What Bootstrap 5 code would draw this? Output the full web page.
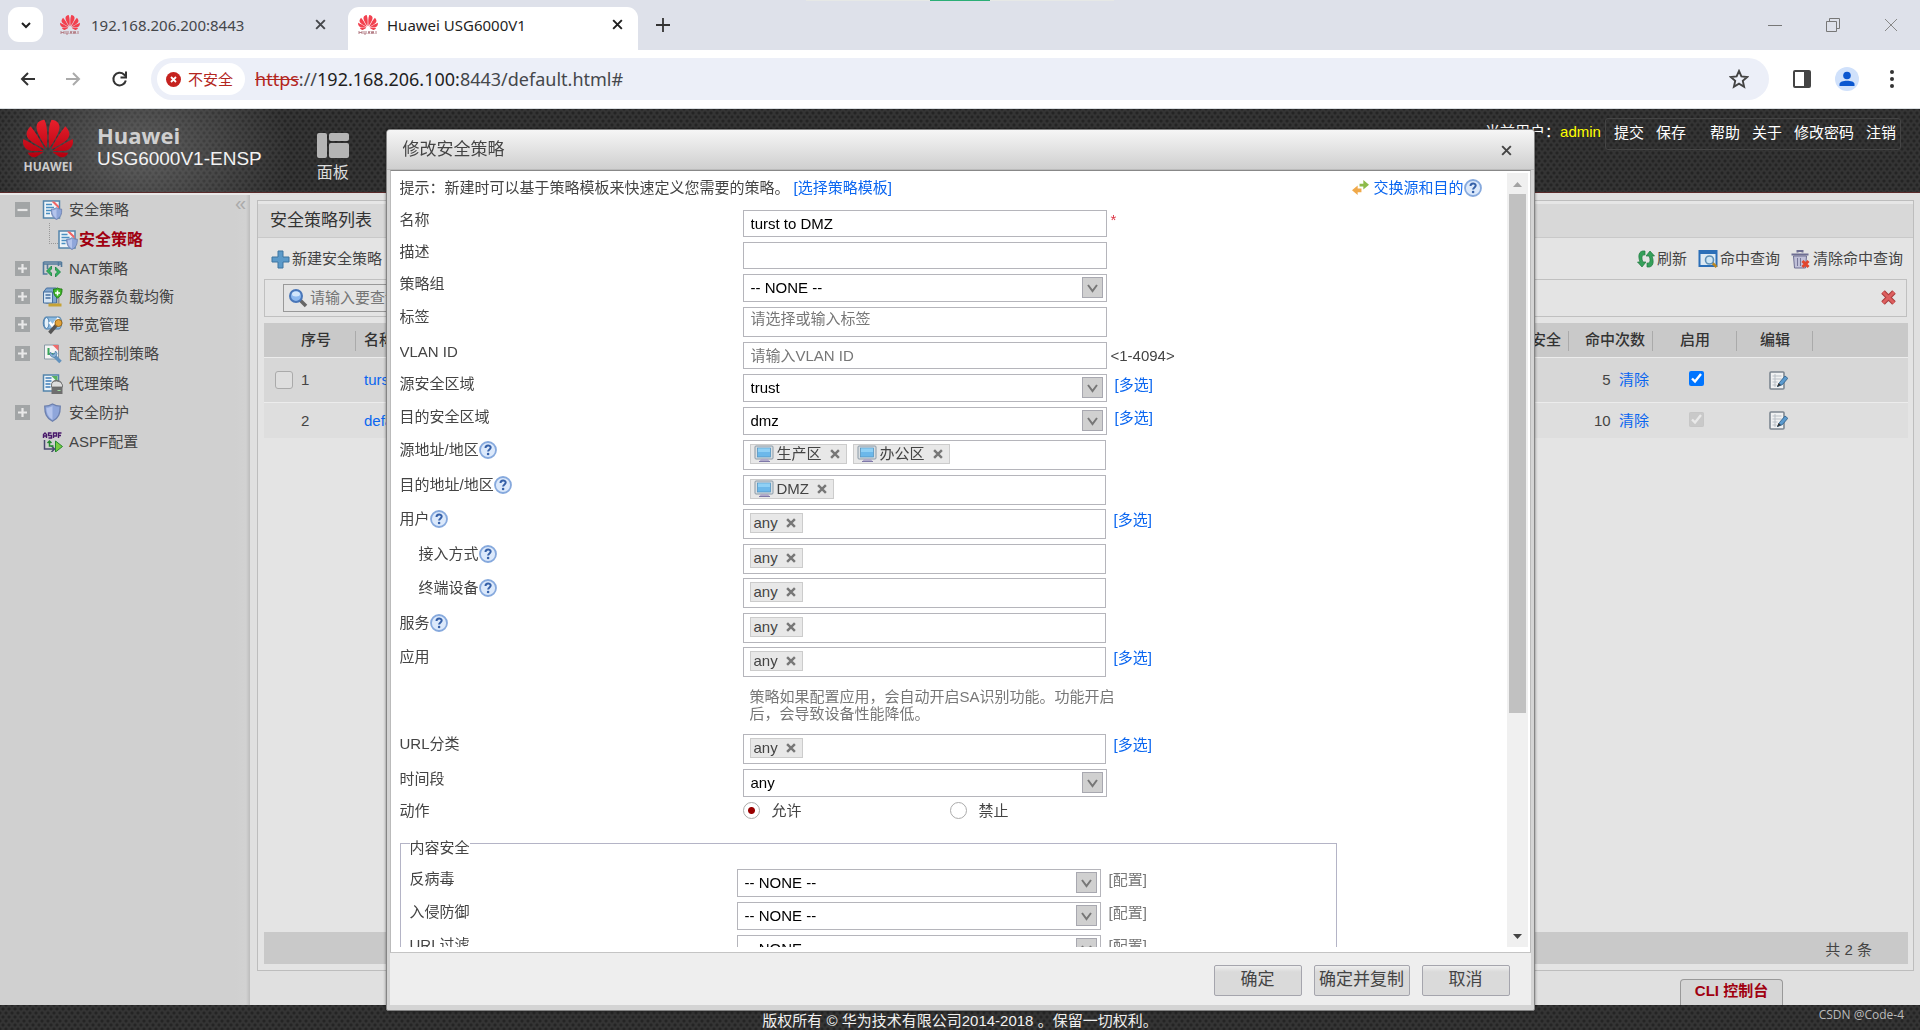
<!DOCTYPE html>
<html lang="zh-CN">
<head>
<meta charset="utf-8">
<meta name="viewport" content="width=device-width, initial-scale=1">
<title>Huawei USG6000V1</title>
<link rel="stylesheet" href="https://cdn.jsdelivr.net/npm/bootstrap@5.3.0/dist/css/bootstrap.min.css">
<style>
:root{--ui:"Liberation Sans","Noto Sans CJK SC",sans-serif;--chrome:"Noto Sans","Noto Sans CJK SC",sans-serif}
body{font:15px/20px var(--ui);color:#444;background:#dfdfdf;overflow:hidden}
a{color:#0a66f0;text-decoration:none}
button{font-family:inherit;color:inherit;border:0;background:none;padding:0}
svg{flex:none;display:block}
/* browser frame */
.strip{height:50px;background:#dee1ea;font-family:var(--chrome);padding:7px 0 0 8px;position:relative}
.share{position:absolute;top:0;left:42%;right:42%;height:1px;background:#e6e8e6}
.share i{display:block;width:60px;height:1px;margin:0 auto;background:#2bae76}
.tabmenu{width:35px;height:35px;border-radius:11px;background:#fff}
.tabx{height:43px;color:#45474b}
.tab-idle{width:305px;padding:0 21px 8px 16px}
.tab-idle span{padding-left:2px}
.tab-on{width:290px;padding:0 14px 8px 9px;background:#fff;border-radius:11px 11px 0 0;color:#1f1f1f}
.strip-row{height:43px}
.winctl{gap:44px;padding:0 22px 8px 0}
.tools{height:59px;background:#fff;border-bottom:1px solid #d9dde0;font-family:var(--chrome);padding:8px 19px;gap:24px}
.omni{height:42px;border-radius:21px;background:#eceff8;padding:0 20px 0 6px;margin-left:-2px}
.chip{height:32px;border-radius:16px;background:#fff;color:#b3261e;padding:0 12px 0 9px;gap:7px;font-size:15px}
.url{font-size:18px;color:#45474b;margin-left:10px}
.url b{font-weight:400;color:#1f1f1f}.url s{color:#b3261e}
/* banner */
.dots{background-color:#343434;background-image:radial-gradient(circle,#242424 1px,transparent 2px),radial-gradient(circle,#242424 1px,transparent 2px);background-size:6px 8px;background-position:0 0,3px 4px}
.banner{height:84px;border-bottom:1px solid #5a2b2b;padding-left:20px;position:relative}
.glow{background:radial-gradient(ellipse 150px 110px at 140px 42px,rgba(170,170,170,.36),transparent);position:absolute;inset:0}
.brand{width:56px;text-align:center;color:#ccc;font:bold 12px/12px "Open Sans",sans-serif}
.brand span{margin-top:1px}
.prod{color:#f2f2f2;font-size:19px;line-height:24px;margin-left:21px;padding-top:14px}
.prod strong{font:bold 22px/24px "Open Sans",sans-serif;color:#d0d0d0}
.panelbtn{color:#ddd;font-size:16px;line-height:20px;gap:5px;margin-left:55px}
.usernav{color:#fff;padding:9px 19px 0 0}
.usernav a{color:#fff}
.usergrp{border:1px solid #444;border-radius:3px;height:32px;padding:4px 4px 0 8px;gap:12px}
.usergrp .brk{margin-right:12px}
.admin{color:#ff0}
/* sidebar */
.side{width:250px;background:linear-gradient(90deg,#d0d0d0 235px,#d2d2d2 246px,#bcbcbc);border-top:2px solid #e9e9e9;position:relative}
.side li{height:28px;padding-left:15px}
.side li>a{color:#444;margin-left:6px}
.side li>.fold{margin-right:12px}
.side .big{height:30px}
.side .subitem{padding-left:58px}
.side .subitem>a{font-weight:700;color:#a00010;font-size:16px;margin-left:1px}
.fold{width:15px;height:15px}
.collapse-btn{position:absolute;right:4px;top:1px;color:#aaa;font-size:20px;line-height:14px}
.twig{position:absolute;left:49px;top:28px;width:9px;height:21px;border:1px dotted #999;border-width:0 0 1px 1px}
/* list panel */
.main{padding:7px 6px 0 7px;background:#e0e0e0}
.sheet{border:1px solid #bdbdbd;background:#e4e4e4;height:771px}
.sheet-h{height:37px;background:#d8d8d8;border-top:3px solid #e6e6e6;border-bottom:1px solid #c9c9c9;padding:2px 12px 0;font-size:17px;color:#333}
.bar{height:41px;padding:2px 10px 0 13px;gap:2px}
.bar .act{margin-right:9px}
.filter{margin:0 6px;height:38px;border:1px solid #c0c0c0;padding:0 9px 0 18px}
.search{border:1px solid #999;height:28px;width:220px;padding:0 4px;gap:2px}
.search input{border:0;background:none;padding:0;width:180px;color:#777}
.gridt{margin:6px 5px 0 6px;table-layout:fixed;width:calc(100% - 11px)}
.gridt th{height:35px;background:#c9c9c9;font-weight:500;color:#333;text-align:center;padding:0;position:relative}
.gridt th.sep::after{content:"";position:absolute;right:0;top:8px;height:20px;border-right:1px solid #aaa}
.gridt td{padding:0;border-top:1px solid #ececec;background:#d7d7d7}
.gridt tr.r1 td{height:45px}.gridt tr.r2 td{height:35px;background:#dedede}
.gridt input{width:15px;height:15px;margin:0;display:block}
.gridt input.pick{width:18px;height:18px;appearance:none;border:1px solid #aaa;border-radius:3px;background:#dedede}
.gridt .tick{padding:0 0 3px 3px}
.gridt .pen{padding-left:6px}
.count{margin:0 5px 6px 6px;height:32px;background:#c9c9c9;padding-right:36px;padding-top:4px}
.cli{height:27px;width:103px;margin-right:131px;margin-top:8px;border:1px solid #999;border-bottom:0;border-radius:4px 4px 0 0;background:#d6d6d6;color:#a00010;font-weight:700;padding-bottom:3px}
.foot{height:25px;color:#f0f0f0;position:relative;padding-top:6px}
.mark-by{position:absolute;right:16px;top:0;color:#bbb;font:12px/20px "Open Sans",sans-serif}
/* dialog */
.dlg{position:fixed;inset:129px 0 19px;margin:0 auto;max-width:1149px;border:1px solid #858585;border-radius:4px 4px 2px 2px;background:#d4d4d4;padding:0 3px 5px;box-shadow:0 0 3px rgba(0,0,0,.5)}
.dlg-h{height:41px;margin:0 -3px;background:linear-gradient(#f6f6f6,#cfcfcf);border-bottom:1px solid #bbb;border-radius:3px 3px 0 0;padding:2px 21px 0 16px;font-size:17px;color:#444}
.dlg-b{background:#fff;border:1px solid #999;border-color:#888 #bbb #c4c4c4;min-height:0;padding:2px 2px 5px 9px}
.formarea{min-height:0;overflow:hidden;padding-top:5px}
.dlg-f{height:52px;background:#eee;padding:2px 21px 0;gap:12px}
.dlg-f button{height:31px;width:88px;font-size:17px;border:1px solid #a5a5ad;border-radius:2px;background:linear-gradient(#eee,#dadada 6px);color:#444}
.dlg-f .wide{width:96px}
.tip{height:32px;padding-right:25px}
.tip .pick-tpl{margin-left:4px}
.fr{height:32px}
.fr.s{height:33px}.fr.t{height:35px}.fr.v{height:34px}.fr.u{height:35px}
.fr>.cap{width:343px;flex:none}
.fr>.cap.in{padding-left:19px}
fieldset .fr>.cap{width:327px}
.box{width:364px;height:27px;border:1px solid #b5b5bb;border-radius:0;background:#fff;padding:0 7px;color:#000;font:15px/20px var(--ui);outline:0}
.box::placeholder{color:#777}
.tall{height:30px;padding:0 7px 6px}
select.box{height:28px;appearance:none;background:url("data:image/svg+xml,%3Csvg xmlns='http://www.w3.org/2000/svg' width='21' height='21'%3E%3Crect x='.5' y='.5' width='20' height='20' fill='%23d0d0d0' stroke='%23a8a8b0'/%3E%3Cpath d='M6 8l4.500 6L15 8' fill='none' stroke='%23777' stroke-width='2'/%3E%3C/svg%3E") no-repeat right 3px center}
.after{margin:1px 0 0 8px}
.cfg{margin:1px 0 0 8px;color:#777}
.toks{width:363px;height:30px;border:1px solid #b5b5bb;padding:3px 6px;gap:6px}
.tok{height:20px;border:1px solid #ccc;background:#e8e8e8;padding:0 6px 0 3px;gap:8px;line-height:18px}
.tok .nm{gap:3px}
.note{margin:6px 0 0 350px;width:370px;height:46px;line-height:17px;color:#777}
.rad{appearance:none;width:17px;height:17px;margin:0;border:1px solid #aaa;border-radius:50%;background:#fff}
.rad:checked{background:radial-gradient(circle,#900 3px,#fff 4px)}
.fr.radios{height:20px}
.opt{gap:12px;width:207px}
fieldset.cs{border:1px solid #b4b4c6;width:937px;padding:0 9px;margin-top:9px}
fieldset.cs legend{float:none;width:auto;font-size:15px;line-height:20px;padding:8px 0 0;margin:0}
.csrows{padding-top:11px}
.sb{width:21px;background:#f0f0f0}
.sb b{display:block;width:17px;height:519px;background:#c1c1c1}
</style>
<script src="https://cdn.jsdelivr.net/npm/bootstrap@5.3.0/dist/js/bootstrap.bundle.min.js"></script>
</head>
<body class="vh-100 d-flex flex-column">
<svg width="0" height="0" class="position-absolute" aria-hidden="true">
<linearGradient id="gr" x1="0" y1="0" x2="0" y2="1"><stop offset="0" stop-color="#e8202c"/><stop offset="1" stop-color="#b5000f"/></linearGradient>
<symbol id="hw" viewBox="0 2.900 24 18.200"><path d="M3.67 6.14S1.82 7.91 1.72 9.78v.35c.08 1.51 1.22 2.4 1.22 2.4 1.83 1.79 6.26 4.04 7.3 4.55 0 0 .06.03.1-.01l.02-.04v-.04C7.52 10.8 3.67 6.14 3.67 6.14zM9.65 18.6c-.02-.08-.1-.08-.1-.08l-7.38.26c.8 1.43 2.15 2.53 3.56 2.2.96-.25 3.16-1.78 3.88-2.3.06-.05.04-.09.04-.09zm.08-.78C6.49 15.63.21 12.28.21 12.28c-.15.46-.2.9-.21 1.3v.07c0 1.07.4 1.82.4 1.82.8 1.69 2.34 2.2 2.34 2.2.7.3 1.4.31 1.4.31.12.02 4.4 0 5.54 0 .05 0 .08-.05.08-.05v-.06c0-.03-.03-.05-.03-.05zM9.06 3.19a3.42 3.42 0 00-2.57 3.15v.41c.03.6.16 1.05.16 1.05.66 2.9 3.86 7.65 4.55 8.65.05.05.1.03.1.03a.1.1 0 00.06-.1c1.06-10.6-1.11-13.42-1.11-13.42-.32.02-1.19.23-1.19.23zm8.299 2.27s-.49-1.8-2.44-2.28c0 0-.57-.14-1.17-.22 0 0-2.18 2.81-1.12 13.43.01.07.06.08.06.08.07.03.1-.03.1-.03.72-1.03 3.9-5.76 4.55-8.64 0 0 .36-1.4.02-2.34zm-2.92 13.07s-.07 0-.09.05c0 0-.01.07.03.1.7.51 2.85 2 3.88 2.3 0 0 .16.05.43.06h.14c.69-.02 1.9-.37 3-2.26l-7.4-.25zm7.83-8.41c.14-2.06-1.94-3.97-1.94-3.98 0 0-3.85 4.66-6.67 10.8 0 0-.03.08.02.13l.04.01h.06c1.06-.53 5.46-2.77 7.28-4.54 0 0 1.15-.93 1.21-2.42zm1.52 2.14s-6.28 3.37-9.52 5.55c0 0-.05.04-.03.11 0 0 .03.06.07.06 1.16 0 5.56 0 5.67-.02 0 0 .57-.02 1.27-.29 0 0 1.56-.5 2.37-2.27 0 0 .73-1.45.17-3.14z"/></symbol>
<symbol id="fav" viewBox="0 0 20 20"><use href="#hw" width="20" height="15" fill="#f2414f"/><path d="M1 16v3M4 16v3M1 17.500h3M6 16v3h2v-3M10 19l1-3 1 3M13 16l1 3 1-3 1 3M18 16v3" stroke="#b58088" fill="none"/></symbol>
<symbol id="x" viewBox="0 0 12 12"><path d="M2 2l8 8M10 2l-8 8" stroke="currentColor" stroke-width="1.800" fill="none"/></symbol>
<symbol id="plus" viewBox="0 0 15 15"><rect width="15" height="15" fill="#a2a5a6"/><path d="M7.500 3v9M3 7.500h9" stroke="#e8e8e8" stroke-width="2.200"/></symbol>
<symbol id="minus" viewBox="0 0 15 15"><rect width="15" height="15" fill="#a2a5a6"/><path d="M2.500 8h10" stroke="#e8e8e8" stroke-width="2.200"/></symbol>
<symbol id="shield" viewBox="0 0 12 13"><path d="M6 .7c2 1.300 3.500 1.500 5.300 1.500 0 5-1 8-5.300 10.300C1.700 10.200.7 7.200.7 2.200 2.500 2.200 4 2 6 .7z" fill="#8fa6da" stroke="#6d80ae" stroke-width=".9"/><path d="M6 2v9.500C3 9.500 2 7 1.800 3.300 3.500 3.200 4.800 2.800 6 2z" fill="#b4c4ec"/></symbol>
<symbol id="pol" viewBox="0 0 20 20"><rect x="1" y="1" width="16" height="17" fill="#eef4f8" stroke="#5384ab" stroke-width="1.500"/><path d="M3.500 4.500h6M3.500 7.500h8M3.500 10.500h6M3.500 13.500h4" stroke="#4a8fc2" stroke-width="1.500"/><path d="M9 1.500h3l4.500 4.500v3z" fill="#f06464"/><use href="#shield" x="8" y="7" width="12" height="13"/></symbol>
<symbol id="nat" viewBox="0 0 20 20"><path d="M1 3h18M1 3v12h4M19 3v5M16 3v4M1 5h18M5 5v5" stroke="#52799c" stroke-width="1.600" fill="none"/><path d="M9 7l-5 5 5 5v-3l-2-2 2-2zM13 8l5 5-5 5v-3l2-2-2-2z" fill="#32b45c" stroke="#178040" stroke-width=".8"/></symbol>
<symbol id="srv" viewBox="0 0 20 20"><path d="M1 5l3-4h10v15H4l-3-1z" fill="#7fa5ce" stroke="#466f9e"/><path d="M1 5h9v11H1z" fill="#d5e5f4" stroke="#466f9e"/><path d="M3 8h5M3 11h5" stroke="#466f9e" stroke-width="1.500"/><path d="M16 10v7" stroke="#999" stroke-width="2"/><path d="M6 18h13" stroke="#c6a336" stroke-width="3"/><path d="M15 1c2 1 3 1 4.500 1 0 5-1 7-4.500 9-3-2-4-4-4-9 2 0 3 0 4-1z" fill="#3fb827" stroke="#217b15"/><path d="M15 3.500v5M12.500 6h5" stroke="#fff" stroke-width="1.500"/></symbol>
<symbol id="bw" viewBox="0 0 20 20"><path d="M3 2h14c3 3 3 9 0 12H3C0 11 0 5 3 2z" fill="#8fbce2" stroke="#4b7eac"/><ellipse cx="4" cy="8" rx="2.500" ry="5.500" fill="#e5f1fa" stroke="#4b7eac"/><path d="M7 7l3 4 6-8" stroke="#fff" stroke-width="2.500" fill="none"/><path d="M7 18l7-8" stroke="#555" stroke-width="3.500"/><circle cx="16" cy="8" r="3.500" fill="#e2a33a" stroke="#9a6a1d"/></symbol>
<symbol id="quota" viewBox="0 0 20 20"><path d="M2 1h14v14H2z" fill="#f3f3f3" stroke="#8899a6"/><path d="M6 4v6h7" stroke="#38a557" stroke-width="2" fill="none"/><path d="M10 1h6v6z" fill="#ef6b6b"/><path d="M10 10l8 8" stroke="#6292bd" stroke-width="3.500"/><path d="M8 8a3.500 3.500 0 1 0 5-1l-1 3-2 1z" fill="#8cb4d8" stroke="#4d7ca6" stroke-width=".7"/></symbol>
<symbol id="proxy" viewBox="0 0 20 20"><path d="M1 1h15v16H1z" fill="#eef4f8" stroke="#5384ab" stroke-width="1.500"/><path d="M3 4h6M3 7h6M3 10h5M3 13h5" stroke="#3f7eb8" stroke-width="1.700"/><path d="M9 2h6v6z" fill="#58b05f"/><path d="M9 11q0-5 5-5t6 5v9H9z" fill="#6e6e6e"/><path d="M9 11q0-4 5-4t6 4v2H9z" fill="#ddd" stroke="#666" stroke-width=".8"/><path d="M15 16.500h3" stroke="#a0e0a0"/></symbol>
<symbol id="aspf" viewBox="0 0 20 20"><path d="M1 6V2.500L2.500 1 4 2.500V6M1 4h3M9 1H6v2.500h3V6H6M11 6V1h3v3h-3M19 1h-3v5M16 3.500h2.500" stroke="#4a1a6b" stroke-width="1.400" fill="none"/><path d="M2 8v9h9M9 14l3 3-3 3" stroke="#4a4a70" stroke-width="1.500" fill="none"/><path d="M5 11l2-2 2 2M7 9v5h4" stroke="#238a30" stroke-width="1.500" fill="none"/><path d="M13 9l7 5.500-7 5.500z" fill="#7ac943" stroke="#238a30"/></symbol>
<symbol id="help" viewBox="0 0 18 18"><circle cx="9" cy="9" r="8" fill="#dce9fb" stroke="#86a9dd" stroke-width="1.800"/><path d="M6.500 7c0-3.500 5.200-3.300 5.200-.4 0 1.800-2.600 1.900-2.600 4" stroke="#3560a8" stroke-width="2" fill="none"/><circle cx="9.100" cy="13" r="1.300" fill="#3560a8"/></symbol>
<symbol id="pc" viewBox="0 0 20 18"><rect x="1" y="1" width="18" height="13" rx="1" fill="#d9dfe3" stroke="#8b9aa6"/><rect x="3.500" y="3" width="13" height="9" fill="#6cb8ea" stroke="#4d8fbd" stroke-width=".7"/><path d="M4 3.400h12v3.600H4z" fill="#8fd0f5"/><path d="M7 14h7l2 3H5z" fill="#b0aaca"/><path d="M5 16.500h11" stroke="#7f78a8"/></symbol>
<symbol id="tx" viewBox="0 0 9 9"><path d="M1 1l7 7M8 1L1 8" stroke="#777" stroke-width="2.200"/></symbol>
<symbol id="edit" viewBox="0 0 19 19"><rect x="1" y="1" width="14" height="17" rx="1" fill="#f0f1f2" stroke="#7d8791" stroke-width="1.600"/><path d="M3.500 5h9M3.500 8h9M3.500 11h5M3.500 14h4M6 3v13" stroke="#b9bfc6"/><path d="M8.500 15.500l2-4 5.500-6.500 2.800 2.300-5.500 6.400z" fill="#5c9bcf" stroke="#3b6c96"/><path d="M8 16l1.500-4 2.500 2z" fill="#333"/></symbol>
</svg>

<header class="strip">
  <div class="share"><i></i></div>
  <div class="d-flex strip-row">
    <button class="tabmenu d-flex align-items-center justify-content-center" aria-label="搜索标签页"><svg width="12" height="12" viewBox="0 0 12 12"><path d="M2 4l4 4 4-4" stroke="#1f1f1f" stroke-width="2" fill="none"/></svg></button>
    <div class="tabx tab-idle d-flex align-items-center"><svg width="22" height="20"><use href="#fav"/></svg><span class="ms-2 flex-grow-1">192.168.206.200:8443</span><button aria-label="关闭"><svg width="13" height="13"><use href="#x"/></svg></button></div>
    <div class="tabx tab-on d-flex align-items-center"><svg width="22" height="20"><use href="#fav"/></svg><span class="ms-2 flex-grow-1">Huawei USG6000V1</span><button aria-label="关闭"><svg width="13" height="13"><use href="#x"/></svg></button></div>
    <button class="ms-3 pb-2" aria-label="新标签页"><svg width="18" height="18" viewBox="0 0 18 18"><path d="M9 2v14M2 9h14" stroke="#333" stroke-width="1.800"/></svg></button>
    <div class="winctl ms-auto d-flex align-items-center">
      <svg width="14" height="14" viewBox="0 0 14 14"><path d="M0 7.500h14" stroke="#777"/></svg>
      <svg width="14" height="14" viewBox="0 0 14 14"><path d="M.5 3.500h10v10H.5zM3.500 3V.5h10v10H11" stroke="#777" fill="none"/></svg>
      <svg width="14" height="14" viewBox="0 0 14 14"><path d="M1 1l12 12M13 1L1 13" stroke="#888"/></svg>
    </div>
  </div>
</header>
<div class="tools d-flex align-items-center">
  <button aria-label="后退"><svg width="18" height="18" viewBox="0 0 18 18"><path d="M16 9H3M9 3L3 9l6 6" stroke="#333" stroke-width="2" fill="none"/></svg></button>
  <button class="ms-1" aria-label="前进"><svg width="18" height="18" viewBox="0 0 18 18"><path d="M1 9h13M8 3l6 6-6 6" stroke="#aaa" stroke-width="2" fill="none"/></svg></button>
  <button class="ms-1" aria-label="刷新"><svg width="18" height="18" viewBox="0 0 18 18"><path d="M14.800 10.500A6.300 6.300 0 1 1 13 4.500l2 2" stroke="#333" stroke-width="2" fill="none"/><path d="M15 1.500v6H9.500" stroke="#333" stroke-width="2" fill="none"/></svg></button>
  <div class="omni flex-grow-1 d-flex align-items-center">
    <span class="chip d-flex align-items-center"><svg width="15" height="15" viewBox="0 0 15 15"><circle cx="7.500" cy="7.500" r="7.500" fill="#c5221f"/><path d="M5 5l5 5M10 5l-5 5" stroke="#fff" stroke-width="1.800"/></svg>不安全</span>
    <span class="url"><s>https</s>://<b>192.168.206.100:</b>8443/default.html#</span>
    <button class="ms-auto" aria-label="收藏"><svg width="20" height="20" viewBox="0 0 20 20"><path d="M10 2l2.400 5.400 5.800.6-4.400 3.900 1.300 5.800-5.100-3-5.100 3 1.300-5.800L1.800 8l5.800-.6z" stroke="#444" stroke-width="1.900" fill="none"/></svg></button>
  </div>
  <button aria-label="侧边栏"><svg width="18" height="18" viewBox="0 0 18 18"><rect x="1" y="1" width="16" height="16" rx="1" stroke="#444" stroke-width="2" fill="none"/><path d="M11 1h6v16h-6z" fill="#444"/></svg></button>
  <button aria-label="用户"><svg width="24" height="24" viewBox="0 0 24 24"><circle cx="12" cy="12" r="12" fill="#d0e1fb"/><circle cx="12" cy="8.500" r="3.800" fill="#0b57d0"/><path d="M4.500 19v-2c0-4.500 15-4.500 15 0v2z" fill="#0b57d0"/></svg></button>
  <button class="px-1" aria-label="菜单"><svg width="10" height="18" viewBox="0 0 10 18"><g fill="#333"><circle cx="5" cy="2" r="2"/><circle cx="5" cy="9" r="2"/><circle cx="5" cy="16" r="2"/></g></svg></button>
</div>

<div class="banner dots">
  <div class="glow"></div>
  <div class="d-flex position-relative">
    <div class="brand pt-2 d-flex flex-column align-items-center"><svg width="50" height="43"><use href="#hw" fill="url(#gr)"/></svg><span>HUAWEI</span></div>
    <div class="prod d-flex flex-column"><strong>Huawei</strong><span>USG6000V1-ENSP</span></div>
    <a class="panelbtn pt-4 d-flex flex-column align-items-center" href="#"><svg width="32" height="25" viewBox="0 0 32 25"><g fill="#b5b5b5"><rect width="10" height="25" rx="2"/><rect x="12" width="20" height="8" rx="2"/><rect x="12" y="10" width="20" height="15" rx="2"/></g></svg><span>面板</span></a>
    <div class="usernav ms-auto d-flex align-items-start">
      <div class="pt-1 me-1">当前用户：<span class="admin">admin</span></div>
      <nav class="usergrp d-flex align-items-start"><a href="#">提交</a><a class="brk" href="#">保存</a><a href="#">帮助</a><a href="#">关于</a><a href="#">修改密码</a><a href="#">注销</a></nav>
    </div>
  </div>
</div>

<div class="d-flex flex-grow-1 overflow-hidden">
  <aside class="side flex-shrink-0">
    <button class="collapse-btn" aria-label="收起">«</button><i class="twig"></i>
    <ul class="list-unstyled mb-0">
      <li class="big d-flex align-items-center"><svg class="fold"><use href="#minus"/></svg><svg width="21" height="20"><use href="#pol"/></svg><a href="#">安全策略</a></li>
      <li class="big subitem d-flex align-items-center"><svg width="20" height="20"><use href="#pol"/></svg><a href="#">安全策略</a></li>
      <li class="d-flex align-items-center"><svg class="fold"><use href="#plus"/></svg><svg width="21" height="20"><use href="#nat"/></svg><a href="#">NAT策略</a></li>
      <li class="d-flex align-items-center"><svg class="fold"><use href="#plus"/></svg><svg width="21" height="20"><use href="#srv"/></svg><a href="#">服务器负载均衡</a></li>
      <li class="d-flex align-items-center"><svg class="fold"><use href="#plus"/></svg><svg width="21" height="20"><use href="#bw"/></svg><a href="#">带宽管理</a></li>
      <li class="big d-flex align-items-center"><svg class="fold"><use href="#plus"/></svg><svg width="21" height="20"><use href="#quota"/></svg><a href="#">配额控制策略</a></li>
      <li class="big d-flex align-items-center"><i class="fold"></i><svg width="21" height="20"><use href="#proxy"/></svg><a href="#">代理策略</a></li>
      <li class="d-flex align-items-center"><svg class="fold"><use href="#plus"/></svg><svg width="21" height="19"><use href="#shield"/></svg><a href="#">安全防护</a></li>
      <li class="big d-flex align-items-center"><i class="fold"></i><svg width="21" height="20"><use href="#aspf"/></svg><a href="#">ASPF配置</a></li>
    </ul>
  </aside>
  <main class="main flex-grow-1">
    <section class="sheet d-flex flex-column">
      <h1 class="sheet-h d-flex align-items-center mb-0 fw-normal">安全策略列表</h1>
      <div class="bar d-flex align-items-center">
        <svg width="19" height="19" viewBox="0 0 19 19"><path d="M7 1h5v6h6v5h-6v6H7v-6H1V7h6z" fill="#5c9ac9" stroke="#3d74a0"/></svg><span class="flex-grow-1">新建安全策略</span>
        <svg width="18" height="18" viewBox="0 0 18 18"><path d="M8 1C1 0 1 7 3 12l-2.500 0L5 17l4-5H6C4 8 5 4 8 5zM10 17c7 1 7-6 5-11l2.500 0L13 1 9 6h3c2 4 1 8-2 7z" fill="#35a05a" stroke="#1f7a40" stroke-width=".7"/></svg><span class="act">刷新</span>
        <svg width="20" height="18" viewBox="0 0 19 18"><rect x="1" y="1" width="17" height="15" fill="#dce9f3" stroke="#2b6fb8" stroke-width="2"/><path d="M1 2.500h17" stroke="#2b6fb8" stroke-width="3"/><path d="M13 12l5 5" stroke="#b98522" stroke-width="2.500"/><circle cx="11" cy="10" r="4" fill="#cfe6f5" stroke="#5d8fb5" stroke-width="1.600"/></svg><span class="act">命中查询</span>
        <svg width="20" height="19" viewBox="0 0 19 19"><path d="M2 6h13l-1 12H3z" fill="#c0c0d8" stroke="#6e6e92"/><path d="M0 4.500h17M6 2.500V1h5v1.500" stroke="#6e6e92" stroke-width="2" fill="none"/><path d="M6 8v8M9 8v8" stroke="#777799"/><path d="M11 11l6 6M17 11l-6 6" stroke="#e2452e" stroke-width="3"/></svg><span>清除命中查询</span>
      </div>
      <div class="filter d-flex align-items-center justify-content-between">
        <label class="search d-flex align-items-center"><svg width="20" height="20" viewBox="0 0 20 20"><path d="M12 12l6 6" stroke="#666" stroke-width="3.500"/><circle cx="8" cy="8" r="6" fill="#8db9f0" stroke="#4976b8" stroke-width="2"/><ellipse cx="8" cy="6" rx="4" ry="2.500" fill="#d3e6fb"/></svg><input type="text" placeholder="请输入要查询的内容" aria-label="查询"></label>
        <button aria-label="关闭"><svg width="17" height="17" viewBox="0 0 17 17"><path d="M3 3l11 11M14 3L3 14" stroke="#a83c3c" stroke-width="5"/><path d="M3 3l11 11M14 3L3 14" stroke="#dd5f5f" stroke-width="3"/></svg></button>
      </div>
      <table class="gridt">
        <colgroup><col style="width:29px"><col style="width:63px"><col style="width:120px"><col><col style="width:90px"><col style="width:84px"><col style="width:84px"><col style="width:76px"><col style="width:95px"></colgroup>
        <thead><tr><th></th><th class="sep text-start ps-2">序号</th><th class="text-start ps-2">名称</th><th></th><th class="sep text-end pe-2">内容安全</th><th class="sep text-end pe-2">命中次数</th><th class="sep">启用</th><th class="sep">编辑</th><th></th></tr></thead>
        <tbody>
          <tr class="r1"><td><input class="pick ms-auto" type="checkbox" aria-label="选择 1"></td><td class="ps-2">1</td><td class="ps-2"><a href="#">turst</a></td><td></td><td></td><td class="text-end pe-1">5 &nbsp;<a href="#">清除</a></td><td class="tick"><input class="mx-auto" type="checkbox" checked aria-label="启用 1"></td><td class="pen"><svg class="mx-auto" width="19" height="19"><use href="#edit"/></svg></td><td></td></tr>
          <tr class="r2"><td></td><td class="ps-2">2</td><td class="ps-2"><a href="#">default</a></td><td></td><td></td><td class="text-end pe-1">10 &nbsp;<a href="#">清除</a></td><td class="tick"><input class="mx-auto" type="checkbox" checked disabled aria-label="启用 2"></td><td class="pen"><svg class="mx-auto" width="19" height="19"><use href="#edit"/></svg></td><td></td></tr>
        </tbody>
      </table>
      <div class="count mt-auto d-flex align-items-center justify-content-end">共 2 条</div>
    </section>
    <div class="d-flex justify-content-end"><button class="cli">CLI 控制台</button></div>
  </main>
</div>
<footer class="foot dots text-center">版权所有 © 华为技术有限公司2014-2018 。保留一切权利。<span class="mark-by">CSDN @Code-4</span></footer>

<div class="dlg d-flex flex-column" role="dialog" aria-label="修改安全策略">
  <div class="dlg-h d-flex align-items-center justify-content-between"><span>修改安全策略</span><button aria-label="关闭"><svg width="13" height="13"><use href="#x"/></svg></button></div>
  <div class="dlg-b flex-grow-1 d-flex">
    <form class="formarea flex-grow-1">
      <div class="tip d-flex justify-content-between align-items-start"><span>提示：新建时可以基于策略模板来快速定义您需要的策略。<a class="pick-tpl" href="#">[选择策略模板]</a></span>
        <a class="d-flex align-items-center" href="#"><svg class="me-1" width="17" height="17" viewBox="0 0 18 18"><path d="M8 5h4V1l6 5-6 5V8H8z" fill="#8dbb4a"/><path d="M10 10H6V7l-6 5 6 5v-3h4z" fill="#f0a94a"/></svg><span>交换源和目的</span><svg width="18" height="18"><use href="#help"/></svg></a></div>
      <div class="fr d-flex align-items-start"><label class="cap" for="f1">名称</label><input class="box" id="f1" type="text" value="turst to DMZ"><span class="ms-1 text-danger">*</span></div>
      <div class="fr d-flex align-items-start"><label class="cap" for="f2">描述</label><input class="box" id="f2" type="text"></div>
      <div class="fr s d-flex align-items-start"><label class="cap" for="f3">策略组</label><select class="box" id="f3"><option>-- NONE --</option></select></div>
      <div class="fr t d-flex align-items-start"><label class="cap" for="f4">标签</label><input class="box tall" id="f4" type="text" placeholder="请选择或输入标签"></div>
      <div class="fr d-flex align-items-start"><label class="cap" for="f5">VLAN ID</label><input class="box" id="f5" type="text" placeholder="请输入VLAN ID"><span class="ms-1 pt-1">&lt;1-4094&gt;</span></div>
      <div class="fr s d-flex align-items-start"><label class="cap" for="f6">源安全区域</label><select class="box" id="f6"><option>trust</option></select><a class="after" href="#">[多选]</a></div>
      <div class="fr s d-flex align-items-start"><label class="cap" for="f7">目的安全区域</label><select class="box" id="f7"><option>dmz</option></select><a class="after" href="#">[多选]</a></div>
      <div class="fr u d-flex align-items-start"><span class="cap d-flex">源地址/地区<svg width="18" height="20"><use href="#help"/></svg></span><div class="toks d-flex"><span class="tok d-flex align-items-center"><span class="nm d-flex align-items-center"><svg width="20" height="18"><use href="#pc"/></svg>生产区</span><svg width="10" height="10"><use href="#tx"/></svg></span><span class="tok d-flex align-items-center"><span class="nm d-flex align-items-center"><svg width="20" height="18"><use href="#pc"/></svg>办公区</span><svg width="10" height="10"><use href="#tx"/></svg></span></div></div>
      <div class="fr v d-flex align-items-start"><span class="cap d-flex">目的地址/地区<svg width="18" height="20"><use href="#help"/></svg></span><div class="toks d-flex"><span class="tok d-flex align-items-center"><span class="nm d-flex align-items-center"><svg width="20" height="18"><use href="#pc"/></svg>DMZ</span><svg width="10" height="10"><use href="#tx"/></svg></span></div></div>
      <div class="fr u d-flex align-items-start"><span class="cap d-flex">用户<svg width="18" height="20"><use href="#help"/></svg></span><div class="toks d-flex"><span class="tok d-flex align-items-center">any<svg width="10" height="10"><use href="#tx"/></svg></span></div><a class="after" href="#">[多选]</a></div>
      <div class="fr v d-flex align-items-start"><span class="cap in d-flex">接入方式<svg width="18" height="20"><use href="#help"/></svg></span><div class="toks d-flex"><span class="tok d-flex align-items-center">any<svg width="10" height="10"><use href="#tx"/></svg></span></div></div>
      <div class="fr u d-flex align-items-start"><span class="cap in d-flex">终端设备<svg width="18" height="20"><use href="#help"/></svg></span><div class="toks d-flex"><span class="tok d-flex align-items-center">any<svg width="10" height="10"><use href="#tx"/></svg></span></div></div>
      <div class="fr v d-flex align-items-start"><span class="cap d-flex">服务<svg width="18" height="20"><use href="#help"/></svg></span><div class="toks d-flex"><span class="tok d-flex align-items-center">any<svg width="10" height="10"><use href="#tx"/></svg></span></div></div>
      <div class="fr u d-flex align-items-start"><span class="cap">应用</span><div class="toks d-flex"><span class="tok d-flex align-items-center">any<svg width="10" height="10"><use href="#tx"/></svg></span></div><a class="after" href="#">[多选]</a></div>
      <p class="note">策略如果配置应用，会自动开启SA识别功能。功能开启后，会导致设备性能降低。</p>
      <div class="fr u d-flex align-items-start"><span class="cap">URL分类</span><div class="toks d-flex"><span class="tok d-flex align-items-center">any<svg width="10" height="10"><use href="#tx"/></svg></span></div><a class="after" href="#">[多选]</a></div>
      <div class="fr d-flex align-items-start"><label class="cap" for="f8">时间段</label><select class="box" id="f8"><option>any</option></select></div>
      <div class="fr radios d-flex align-items-start"><span class="cap">动作</span><label class="opt d-flex align-items-center"><input class="rad" type="radio" name="act" checked>允许</label><label class="opt d-flex align-items-center"><input class="rad" type="radio" name="act">禁止</label></div>
      <fieldset class="cs"><legend>内容安全</legend>
        <div class="csrows">
        <div class="fr s d-flex align-items-start"><label class="cap" for="g1">反病毒</label><select class="box" id="g1"><option>-- NONE --</option></select><span class="cfg">[配置]</span></div>
        <div class="fr s d-flex align-items-start"><label class="cap" for="g2">入侵防御</label><select class="box" id="g2"><option>-- NONE --</option></select><span class="cfg">[配置]</span></div>
        <div class="fr s d-flex align-items-start"><label class="cap" for="g3">URL过滤</label><select class="box" id="g3"><option>-- NONE --</option></select><span class="cfg">[配置]</span></div>
        </div>
      </fieldset>
    </form>
    <div class="sb d-flex flex-column align-items-center flex-shrink-0"><svg width="21" height="21" viewBox="0 0 21 21"><path d="M6 14l4.500-5 4.500 5z" fill="#a3a3a3"/></svg><b></b><svg class="mt-auto" width="21" height="21" viewBox="0 0 21 21"><path d="M6 8l4.500 5L15 8z" fill="#444"/></svg></div>
  </div>
  <div class="dlg-f d-flex align-items-center justify-content-end flex-shrink-0"><button>确定</button><button class="wide">确定并复制</button><button>取消</button></div>
</div>
</body>
</html>
